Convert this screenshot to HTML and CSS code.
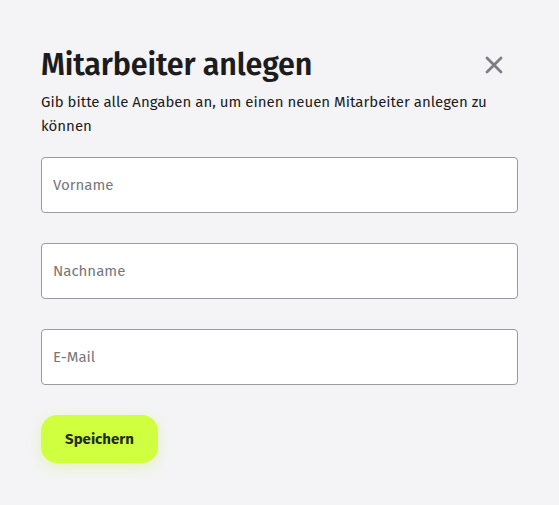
FILE: index.html
```html
<!DOCTYPE html>
<html lang="de">
<head>
<meta charset="utf-8">
<link rel="stylesheet" href="styles.css">
</head>
<body>
<div class="dialog">
  <div class="header">
    <h1 class="title">Mitarbeiter anlegen</h1>
    <button class="close" aria-label="Schließen">
      <svg width="18" height="18" viewBox="0 0 18 18"><path d="M2 2 L16 16 M16 2 L2 16" stroke="#7d7d85" stroke-width="2.8" stroke-linecap="round"/></svg>
    </button>
  </div>
  <p class="lead">Gib bitte alle Angaben an, um einen neuen Mitarbeiter anlegen zu können</p>
  <form class="form">
    <input class="field" type="text" placeholder="Vorname">
    <input class="field" type="text" placeholder="Nachname">
    <input class="field" type="email" placeholder="E-Mail">
    <div class="actions"><button type="button" class="save">Speichern</button></div>
  </form>
</div>
</body>
</html>
```
FILE: styles.css
```css
html, body { margin: 0; padding: 0; }
body {
  background: #f4f4f6;
  font-family: "Fira Sans", "Open Sans", "Noto Sans", sans-serif;
  color: #1c1c1e;
  width: 559px;
  height: 505px;
}
.dialog { padding: 45px 41px 0 41px; }
.header { display: flex; justify-content: space-between; align-items: center; }
.title { margin: 0; font-size: 30.5px; font-weight: 600; line-height: 40px; letter-spacing: -0.15px; }
.close { background: none; border: 0; padding: 0; width: 24px; height: 24px; display: flex; align-items: center; justify-content: center; margin-right: 12px; cursor: pointer; }
.lead { margin: 5px 0 0 0; font-size: 15px; line-height: 24px; }
.form { display: flex; flex-direction: column; gap: 30px; margin-top: 19px; }
.field {
  box-sizing: border-box; height: 56px; width: 100%;
  border: 1px solid #9a9a9e; border-radius: 4px; background: #fff;
  padding: 0 11px; font: inherit; font-size: 15px; color: #222;
}
.field::placeholder { color: #77777b; }
.actions { display: flex; }
.save {
  width: 117px; height: 48px; border: 0; border-radius: 16px;
  background: #d0ff40; color: #1f2b28; font: inherit; font-size: 15px; font-weight: 700;
  box-shadow: 0 4px 14px rgba(200, 240, 80, 0.35);
}
```
